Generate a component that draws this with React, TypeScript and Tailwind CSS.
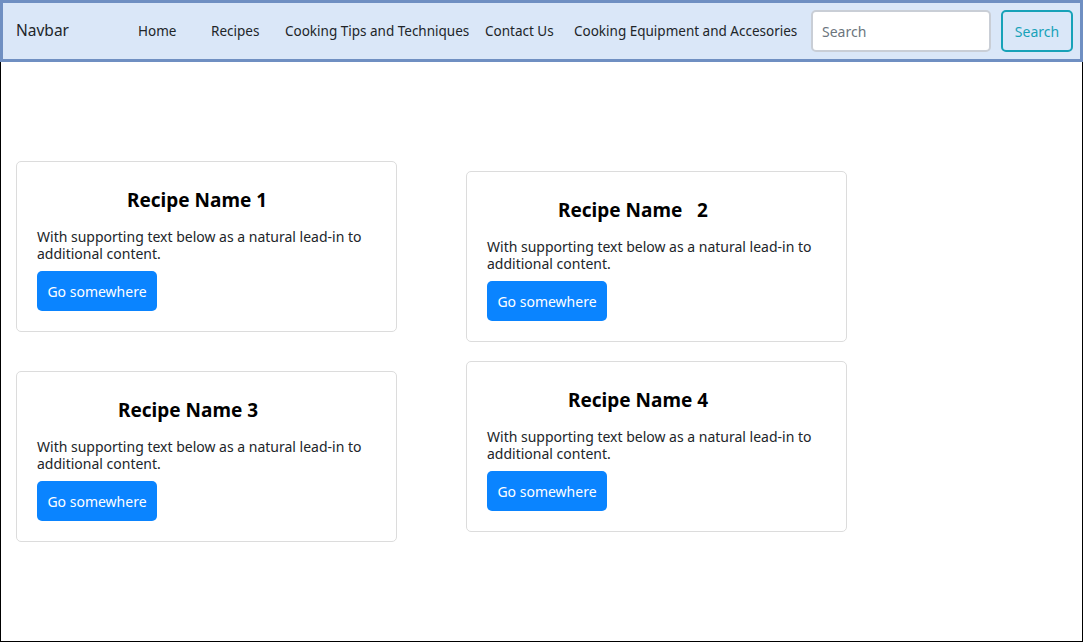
import React from "react";

const FONT = { fontFamily: '"Noto Sans", "DejaVu Sans", sans-serif' };

interface Recipe {
  title: string;
  pad: string;
}

function RecipeCard({ title, pad }: Recipe) {
  return (
    <div className="h-[171px] w-[381px] rounded-[5px] border border-[#dcdcdc] bg-white px-5 pt-[25px]">
      <h5 className={`whitespace-pre text-[19px] font-bold leading-[26px] text-black ${pad}`}>{title}</h5>
      <p className="mt-[15px] text-[14px] leading-[17px] text-[#212529]">
        With supporting text below as a natural lead-in to additional content.
      </p>
      <button className="mt-[9px] h-10 w-[120px] rounded-[5px] bg-[#0a84ff] text-[14px] text-white">
        Go somewhere
      </button>
    </div>
  );
}

export default function App() {
  return (
    <div style={FONT} className="h-[642px] w-[1083px] border border-t-0 border-black bg-white">
      <nav className="-mx-px flex h-[62px] items-center whitespace-nowrap border-[3px] border-[#6f8fc2] bg-[#dae7f8] pl-[13px] pr-[8px] text-[13.5px] text-[#212529]">
        <span className="w-[122px] shrink-0 text-[15.5px]">Navbar</span>
        <a className="w-[73px] shrink-0">Home</a>
        <a className="w-[74px] shrink-0">Recipes</a>
        <a className="w-[200px] shrink-0">Cooking Tips and Techniques</a>
        <a className="w-[89px] shrink-0">Contact Us</a>
        <a className="w-[237px] shrink-0">Cooking Equipment and Accesories</a>
        <input
          placeholder="Search"
          className="h-[42px] w-[180px] shrink-0 rounded-[5px] border-2 border-[#c9ced6] bg-white px-[9px] text-[14px] outline-none placeholder:text-[#6c757d]"
        />
        <button className="ml-[10px] h-[42px] w-[72px] shrink-0 rounded-[5px] border-2 border-[#17a2b8] text-[14px] text-[#17a2b8]">
          Search
        </button>
      </nav>
      <div className="flex gap-[69px] pl-[15px]">
        <div className="flex flex-col gap-[39px] pt-[99px]">
          <RecipeCard title="Recipe Name 1" pad="pl-[90px]" />
          <RecipeCard title="Recipe Name 3" pad="pl-[81px]" />
        </div>
        <div className="flex flex-col gap-[19px] pt-[109px]">
          <RecipeCard title={"Recipe Name   2"} pad="pl-[71px]" />
          <RecipeCard title="Recipe Name 4" pad="pl-[81px]" />
        </div>
      </div>
    </div>
  );
}
